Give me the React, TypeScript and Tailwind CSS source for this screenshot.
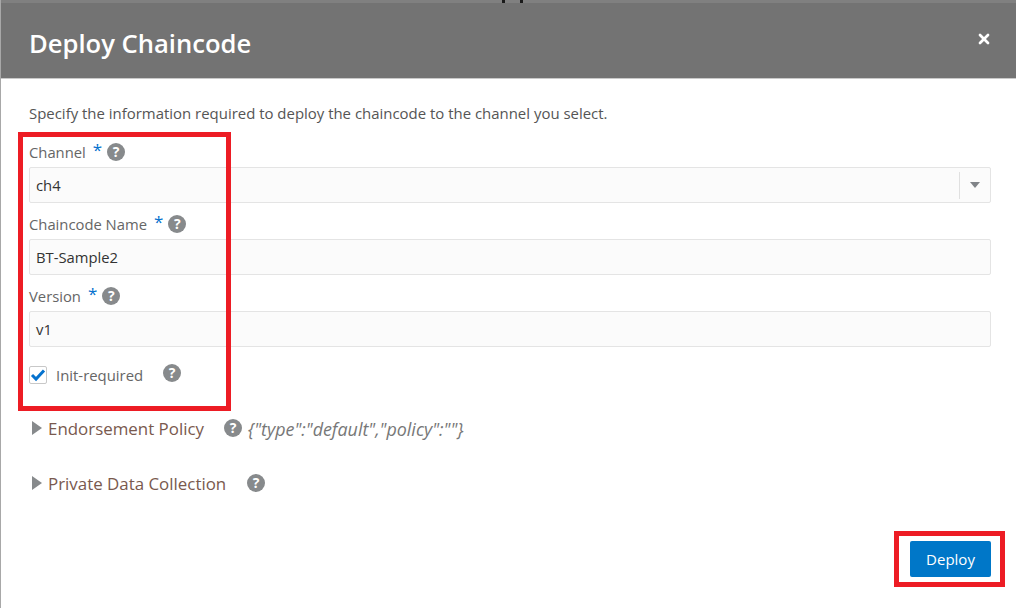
import { X } from "lucide-react"

const Help = () => (
  <span className="inline-flex w-[18px] h-[18px] rounded-full bg-[#878a8c] text-white text-[14px] font-bold items-center justify-center leading-none">
    ?
  </span>
)

const Label = ({ text }: { text: string }) => (
  <div className="flex items-center h-[20px] text-[14.8px] text-[#666666]">
    <span>{text}</span>
    <span className="text-[#0572ce] text-[17px] ml-[7px] mr-[5px] -mt-[4px]">*</span>
    <Help />
  </div>
)

const Field = ({ value, select }: { value: string; select?: boolean }) => (
  <div className="flex items-center h-[36px] mt-[5px] pl-[6px] border border-[#e4e4e4] rounded-[2px] bg-[#fbfbfb] text-[14.8px] text-[#333333]">
    <span className="flex-1">{value}</span>
    {select && (
      <div className="flex items-center justify-center w-[31px] h-[27px] border-l border-[#e0e0e0]">
        <div className="w-0 h-0 border-l-[5px] border-r-[5px] border-t-[6px] border-l-transparent border-r-transparent border-t-[#808488]" />
      </div>
    )}
  </div>
)

const Section = ({ title, children }: { title: string; children?: React.ReactNode }) => (
  <div className="flex items-center h-[24px] text-[#79594e]">
    <div className="w-0 h-0 border-t-[7px] border-b-[7px] border-l-[10px] border-t-transparent border-b-transparent border-l-[#878a8c] ml-[3px] -mt-[3px]" />
    <span className="ml-[6px] text-[16.9px]">{title}</span>
    {children}
  </div>
)

export default function App() {
  return (
    <div className="relative w-[1016px] h-[608px] overflow-hidden bg-white font-['Open_Sans',sans-serif] border-l border-[#a8a8a8]">
      <div className="relative flex items-center justify-between h-[79px] bg-[#737373] border-t-[3px] border-t-[#808080] border-b border-b-[#c9c9c9] pl-[28px] pr-[24px]">
        <h1 className="text-[25.6px] font-semibold text-white mt-[8px]">Deploy Chaincode</h1>
        <X size={16} strokeWidth={4} className="text-white -mt-[4px]" />
        <div className="absolute left-[501px] -top-[3px] w-[3px] h-[3px] bg-[#1a1a1a]" />
        <div className="absolute left-[519px] -top-[3px] w-[3px] h-[3px] bg-[#1a1a1a]" />
      </div>

      <div className="pl-[28px] pr-[25px]">
        <p className="mt-[24px] h-[20px] text-[14.95px] leading-[20px] text-[#555555]">
          Specify the information required to deploy the chaincode to the channel you select.
        </p>

        <div className="mt-[19px]">
          <Label text="Channel" />
          <Field value="ch4" select />
        </div>
        <div className="mt-[11px]">
          <Label text="Chaincode Name" />
          <Field value="BT-Sample2" />
        </div>
        <div className="mt-[11px]">
          <Label text="Version" />
          <Field value="v1" />
        </div>

        <div className="flex items-center mt-[16px] h-[24px]">
          <div className="flex items-center justify-center w-[18px] h-[18px] border border-[#c8c8c8] rounded-[2px] bg-white">
            <svg viewBox="0 0 16 16" className="w-[16px] h-[16px]">
              <path d="M2 8 L6 12 L14 3.5" fill="none" stroke="#0572ce" strokeWidth="3" />
            </svg>
          </div>
          <span className="ml-[9px] text-[14.9px] text-[#666666]">Init-required</span>
          <span className="ml-[20px] -mt-[4px] inline-flex"><Help /></span>
        </div>

        <div className="mt-[30px]">
          <Section title="Endorsement Policy">
            <span className="ml-[20px] -mt-[3px] inline-flex"><Help /></span>
            <span className="ml-[6px] text-[17.9px] italic text-[#777777]">{'{"type":"default","policy":""}'}</span>
          </Section>
        </div>
        <div className="mt-[31px]">
          <Section title="Private Data Collection">
            <span className="ml-[21px] -mt-[3px] inline-flex"><Help /></span>
          </Section>
        </div>

        <div className="flex justify-end mt-[45px]">
          <button className="w-[81px] h-[36px] rounded-[2px] bg-[#0077c8] text-white text-[15px]">Deploy</button>
        </div>
      </div>

      {/* annotation boxes drawn over the form */}
      <div className="absolute left-[17px] top-[132px] w-[213px] h-[279px] border-[5px] border-[#ed1c24]" />
      <div className="absolute left-[893px] top-[531px] w-[111px] h-[56px] border-[5px] border-[#ed1c24]" />
    </div>
  )
}
